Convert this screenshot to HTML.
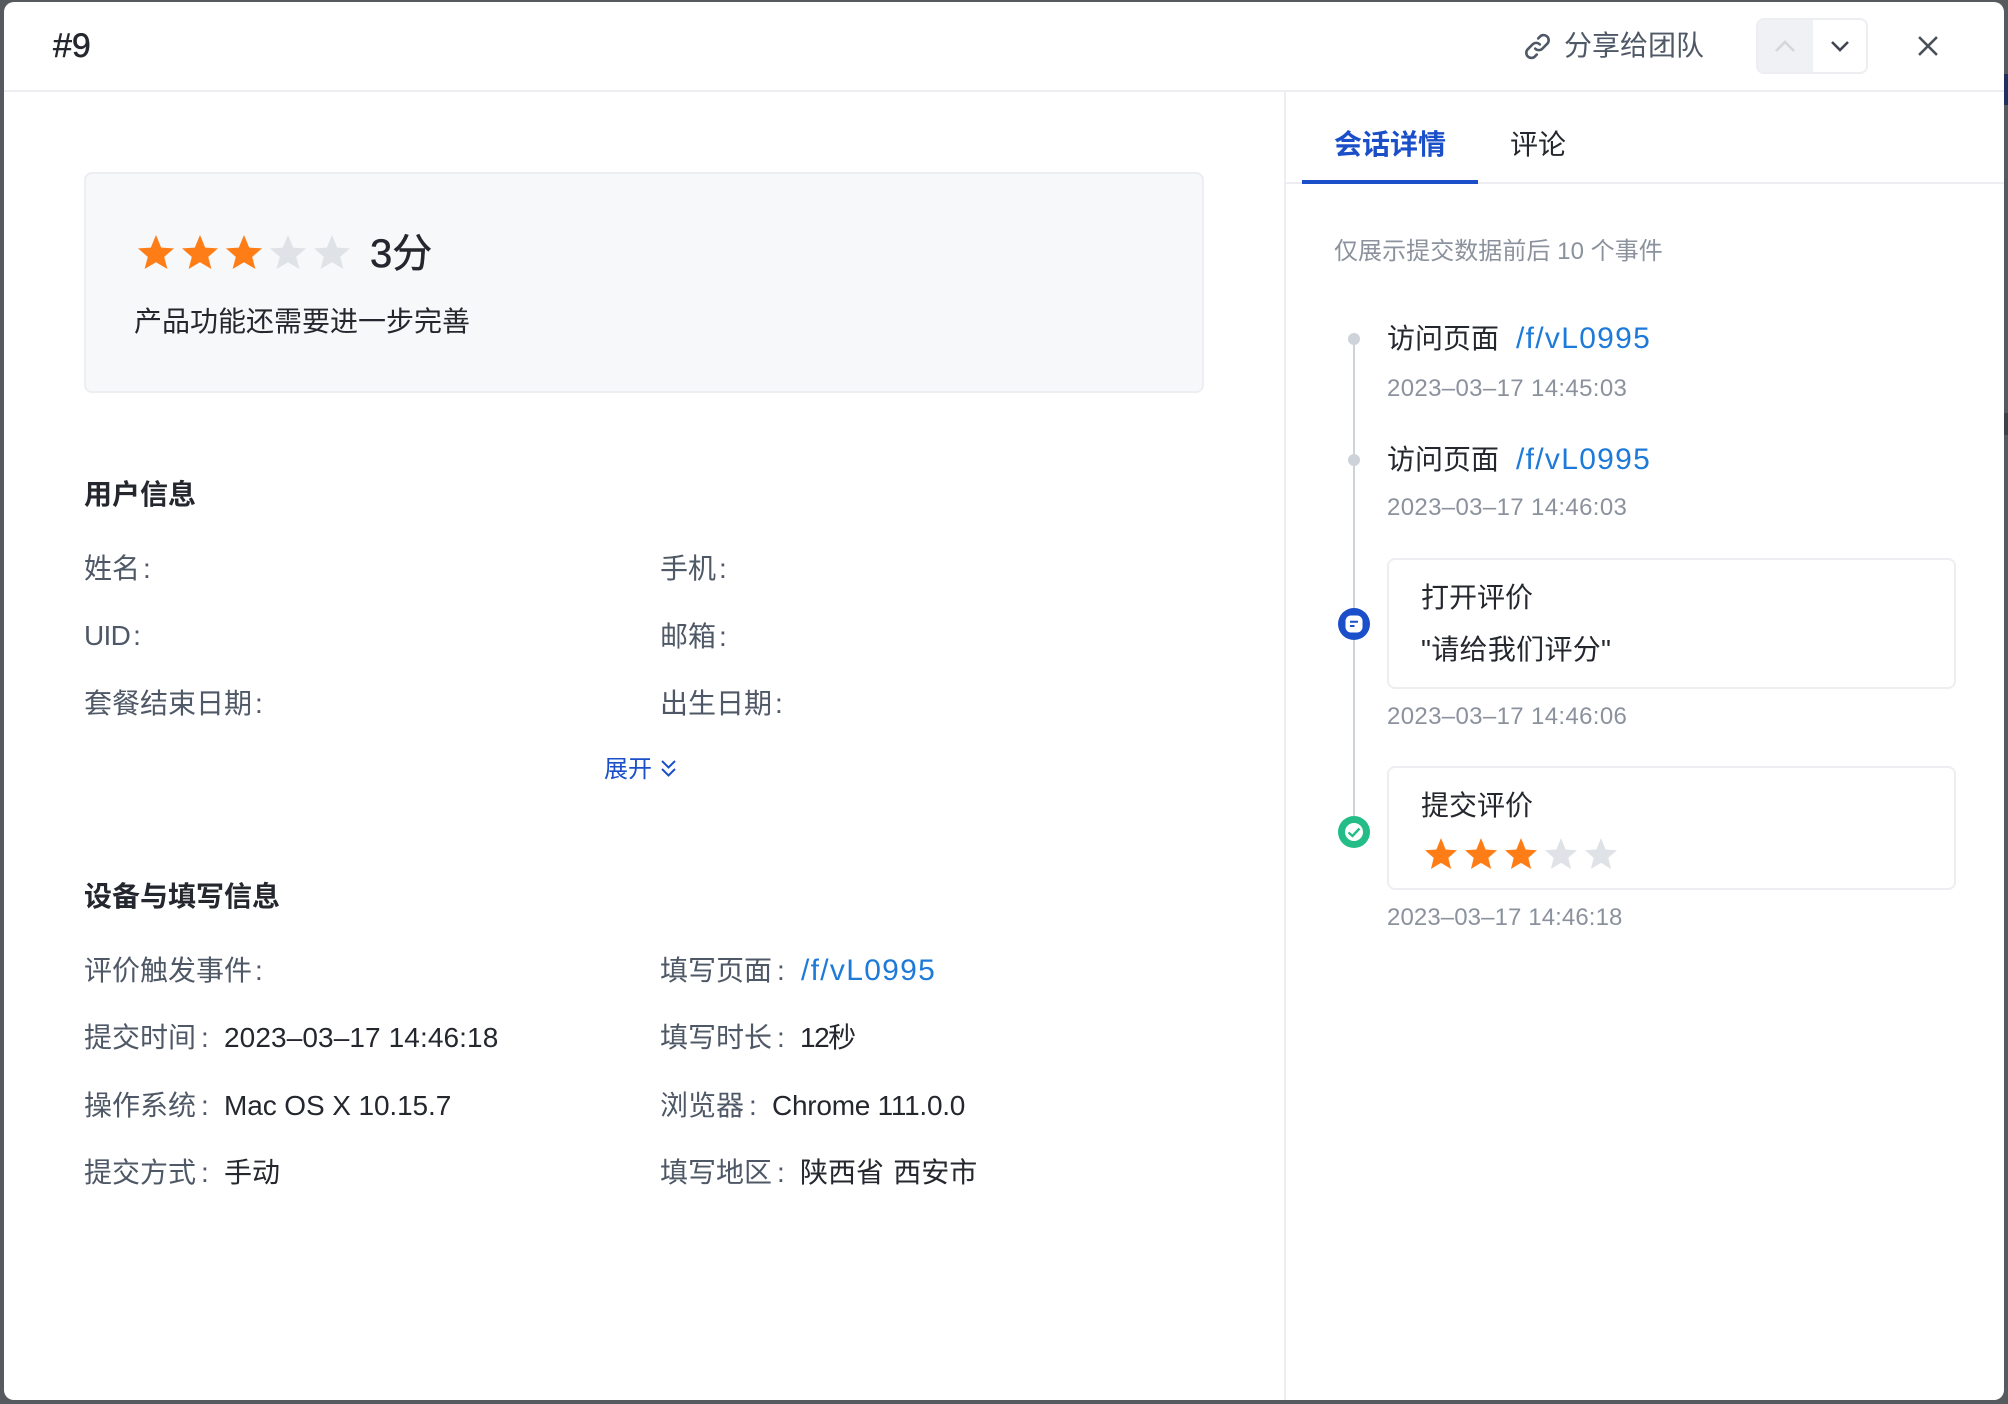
<!DOCTYPE html>
<html lang="zh">
<head>
<meta charset="utf-8">
<title>#9</title>
<style>
html,body{margin:0;padding:0;width:2008px;height:1404px;overflow:hidden;background:#565a5e}
body{position:relative;font-family:"Liberation Sans","Noto Sans CJK SC",sans-serif;font-size:28px;color:#24272e}
.modal{position:absolute;left:4px;top:2px;width:2000px;height:1398px;background:#fff;border-radius:10px}
.t{position:absolute;line-height:40px;height:40px;white-space:nowrap}
.l{color:#4f5866}
.b{font-weight:500}
.s{font-weight:700;color:#24272e}
.a{color:#1d7ad8;font-size:30px;letter-spacing:1.3px}
.g{color:#8b929d;font-size:24px;letter-spacing:.35px}
.hl{position:absolute;background:#eceef2}
.box{position:absolute;box-sizing:border-box;border:2px solid #eceef2;border-radius:8px;background:#fff}
svg{position:absolute;display:block;overflow:visible}
.c{margin-left:3px}
.f{margin-left:5px}
</style>
</head>
<body>
<div style="position:absolute;left:2004px;top:74px;width:4px;height:31px;background:#22305f"></div>
<div style="position:absolute;left:2004px;top:413px;width:4px;height:22px;background:#3e4145"></div>
<div class="modal"></div>

<!-- Header -->
<div class="t b" style="left:53px;top:26px;font-size:34px;-webkit-text-stroke:.5px #24272e">#9</div>
<svg style="left:1524px;top:33px" width="27" height="27" viewBox="0 0 27 27" fill="none" stroke="#4f5866" stroke-width="2.6" stroke-linecap="round">
  <path d="M11.2 15.6a5 5 0 0 0 7.2 0l5-5a5.1 5.1 0 0 0-7.2-7.2l-2 2"/>
  <path d="M15.8 11.4a5 5 0 0 0-7.2 0l-5 5a5.1 5.1 0 0 0 7.2 7.2l2-2"/>
</svg>
<div class="t l" style="left:1564px;top:26px">分享给团队</div>
<div style="position:absolute;left:1756px;top:18px;width:112px;height:56px;box-sizing:border-box;border:2px solid #eceef2;border-radius:8px;background:#fff;overflow:hidden">
  <div style="position:absolute;left:-2px;top:-2px;width:57px;height:56px;background:#f0f1f4"></div>
</div>
<svg style="left:1775px;top:40px" width="20" height="12" viewBox="0 0 20 12" fill="none" stroke="#d3d7dd" stroke-width="2.6"><path d="M1 11l9-9 9 9"/></svg>
<svg style="left:1831px;top:40px" width="18" height="12" viewBox="0 0 18 12" fill="none" stroke="#3f4651" stroke-width="2.6"><path d="M1 2l8 8 8-8"/></svg>
<svg style="left:1918px;top:36px" width="20" height="20" viewBox="0 0 19 19" fill="none" stroke="#4a5059" stroke-width="2.4"><path d="M1 1l17 17M18 1L1 18"/></svg>
<div class="hl" style="left:4px;top:90px;width:2000px;height:2px"></div>
<div class="hl" style="left:1284px;top:92px;width:2px;height:1308px"></div>

<!-- Rating card -->
<div style="position:absolute;left:84px;top:172px;width:1120px;height:221px;box-sizing:border-box;border:2px solid #eceef2;border-radius:8px;background:#f7f8fa"></div>
<svg style="left:138px;top:235px" width="212" height="34" viewBox="0 0 212 34">
  <defs><path id="st" d="M18 0l5.2 12.6L36 13.4l-9.8 8.5L29.4 34 18 27.3 6.600 34l3.200-12.100L0 13.400l12.800-.8z"/></defs>
  <use href="#st" fill="#ff7d17"/><use href="#st" x="44" fill="#ff7d17"/><use href="#st" x="88" fill="#ff7d17"/><use href="#st" x="132" fill="#dfe2e6"/><use href="#st" x="176" fill="#dfe2e6"/>
</svg>
<div class="t" style="left:370px;top:234px;font-size:40px;-webkit-text-stroke:.5px #24272e">3分</div>
<div class="t" style="left:134px;top:302px">产品功能还需要进一步完善</div>

<!-- User info -->
<div class="t s" style="left:84px;top:475px">用户信息</div>
<div class="t l" style="left:84px;top:549px">姓名<span class="c">:</span></div>
<div class="t l" style="left:660px;top:549px">手机<span class="c">:</span></div>
<div class="t l" style="left:84px;top:616px;letter-spacing:-.7px">UID<span class="c">:</span></div>
<div class="t l" style="left:660px;top:617px">邮箱<span class="c">:</span></div>
<div class="t l" style="left:84px;top:684px">套餐结束日期<span class="c">:</span></div>
<div class="t l" style="left:660px;top:684px">出生日期<span class="c">:</span></div>
<div class="t" style="left:604px;top:750px;font-size:24px;color:#1a4fc9">展开</div>
<svg style="left:661px;top:760px" width="15" height="17" viewBox="0 0 15 17" fill="none" stroke="#1a4fc9" stroke-width="2"><path d="M1 1l6.500 6.500L14 1M1 9l6.500 6.500L14 9"/></svg>

<!-- Device info -->
<div class="t s" style="left:84px;top:877px">设备与填写信息</div>
<div class="t l" style="left:84px;top:951px">评价触发事件<span class="c">:</span></div>
<div class="t l" style="left:660px;top:951px">填写页面<span class="f">:</span></div>
<div class="t a" style="left:801px;top:951px">/f/vL0995</div>
<div class="t l" style="left:84px;top:1018px">提交时间<span class="f">:</span></div>
<div class="t" style="left:224px;top:1018px;letter-spacing:.1px">2023–03–17 14:46:18</div>
<div class="t l" style="left:660px;top:1018px">填写时长<span class="f">:</span></div>
<div class="t" style="left:800px;top:1018px;letter-spacing:-1.5px">12秒</div>
<div class="t l" style="left:84px;top:1086px">操作系统<span class="f">:</span></div>
<div class="t" style="left:224px;top:1086px;letter-spacing:-.1px">Mac OS X 10.15.7</div>
<div class="t l" style="left:660px;top:1086px">浏览器<span class="f">:</span></div>
<div class="t" style="left:772px;top:1086px;letter-spacing:-.25px">Chrome 111.0.0</div>
<div class="t l" style="left:84px;top:1153px">提交方式<span class="f">:</span></div>
<div class="t" style="left:224px;top:1153px">手动</div>
<div class="t l" style="left:660px;top:1153px">填写地区<span class="f">:</span></div>
<div class="t" style="left:800px;top:1153px;word-spacing:1.5px">陕西省 西安市</div>

<!-- Tabs -->
<div class="t b" style="left:1334px;top:125px;color:#1a4fc9;font-weight:700">会话详情</div>
<div class="t" style="left:1510px;top:125px">评论</div>
<div class="hl" style="left:1286px;top:182px;width:718px;height:2px"></div>
<div style="position:absolute;left:1302px;top:180px;width:176px;height:4px;background:#1a4fc9"></div>
<div class="t" style="left:1334px;top:232px;font-size:24px;color:#8b929d;letter-spacing:.05px">仅展示提交数据前后 10 个事件</div>

<!-- Timeline -->
<div style="position:absolute;left:1353px;top:339px;width:2px;height:480px;background:#ced3da"></div>
<div style="position:absolute;left:1348px;top:333px;width:12px;height:12px;border-radius:50%;background:#ced3da"></div>
<div class="t" style="left:1387px;top:319px">访问页面</div>
<div class="t a" style="left:1516px;top:319px">/f/vL0995</div>
<div class="t g" style="left:1387px;top:369px">2023–03–17 14:45:03</div>

<div style="position:absolute;left:1348px;top:454px;width:12px;height:12px;border-radius:50%;background:#ced3da"></div>
<div class="t" style="left:1387px;top:440px">访问页面</div>
<div class="t a" style="left:1516px;top:440px">/f/vL0995</div>
<div class="t g" style="left:1387px;top:488px">2023–03–17 14:46:03</div>

<div class="box" style="left:1387px;top:558px;width:569px;height:131px"></div>
<div class="t" style="left:1421px;top:578px">打开评价</div>
<div class="t" style="left:1421px;top:630px;letter-spacing:.3px">"请给我们评分"</div>
<svg style="left:1338px;top:608px" width="32" height="32" viewBox="0 0 32 32">
  <circle cx="16" cy="16" r="16" fill="#1a4fc9"/>
  <rect x="7.500" y="7.500" width="17" height="17" rx="5.500" fill="#fff"/>
  <path d="M12 13.700h8M12 18h4.500" stroke="#1a4fc9" stroke-width="2" fill="none"/>
</svg>
<div class="t g" style="left:1387px;top:697px">2023–03–17 14:46:06</div>

<div class="box" style="left:1387px;top:766px;width:569px;height:124px"></div>
<div class="t" style="left:1421px;top:786px">提交评价</div>
<svg style="left:1425px;top:838px" width="192" height="31" viewBox="0 0 192 31">
  <defs><path id="st2" d="M16 0l4.600 11.500L32 12.200l-8.700 7.700L26.100 31 16 24.900 5.900 31l2.800-11.100L0 12.200l11.400-.7z"/></defs>
  <use href="#st2" fill="#ff7d17"/><use href="#st2" x="40" fill="#ff7d17"/><use href="#st2" x="80" fill="#ff7d17"/><use href="#st2" x="120" fill="#dfe2e6"/><use href="#st2" x="160" fill="#dfe2e6"/>
</svg>
<svg style="left:1338px;top:816px" width="32" height="32" viewBox="0 0 32 32">
  <circle cx="16" cy="16" r="16" fill="#24bd87"/>
  <circle cx="16" cy="16" r="9" fill="#fff"/>
  <path d="M10.500 16.500l4 3.500 7-7.500" stroke="#24bd87" stroke-width="2.400" fill="none"/>
</svg>
<div class="t g" style="left:1387px;top:898px;letter-spacing:.1px">2023–03–17 14:46:18</div>
</body>
</html>
